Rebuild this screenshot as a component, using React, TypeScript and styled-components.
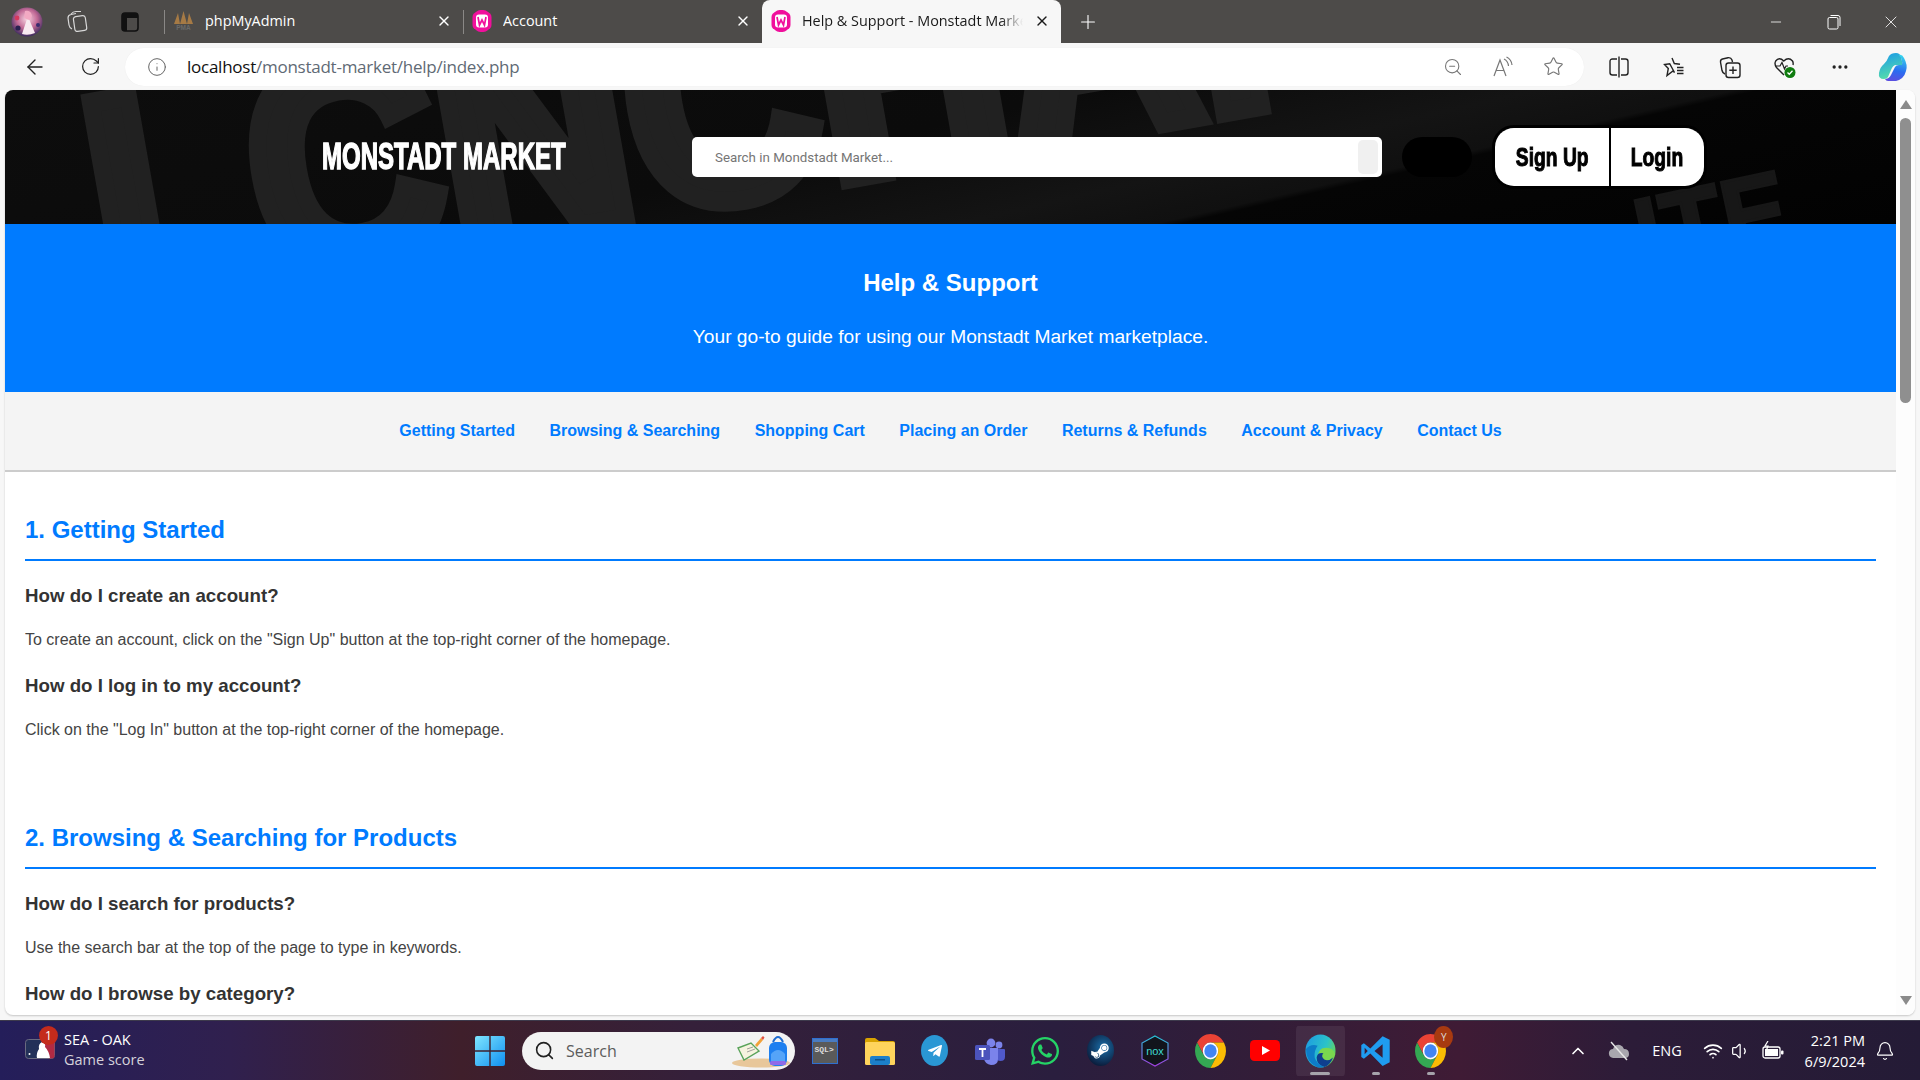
import React from 'react';
import styled, { createGlobalStyle } from 'styled-components';
import {
  ArrowLeft, RotateCw, Info, ZoomOut, Star, X, Plus, Minus, Search, ChevronUp, Bell, Wifi, Volume1, Ellipsis,
} from 'lucide-react';
import { FaWhatsapp, FaTelegramPlane, FaSteamSymbol } from 'react-icons/fa';

const GlobalStyle = createGlobalStyle`
  html, body { margin: 0; padding: 0; overflow: hidden; }
  body { width: 1920px; height: 1080px; background: #f7f7f7; font-family: "Liberation Sans", Arial, sans-serif; }
  * { box-sizing: border-box; }
`;

const Screen = styled.div`
  width: 1920px;
  height: 1080px;
  display: flex;
  flex-direction: column;
  background: #f7f7f7;
`;

/* browser chrome */
const TabStrip = styled.div`
  height: 43px;
  background: #4d4b49;
  display: flex;
  align-items: stretch;
  font-family: "Open Sans", "Noto Sans", sans-serif;
`;

const StripIcon = styled.div<{ $w: number }>`
  width: ${(p) => p.$w}px;
  display: flex;
  align-items: center;
  justify-content: center;
  flex-shrink: 0;
`;

const Tab = styled.div<{ $active?: boolean; $w: number }>`
  position: relative;
  width: ${(p) => p.$w}px;
  display: flex;
  align-items: center;
  gap: 11px;
  padding: 0 11px 2px 9px;
  font-size: 14.4px;
  flex-shrink: 0;
  color: ${(p) => (p.$active ? '#1a1a1a' : '#fff')};
  background: ${(p) => (p.$active ? '#f7f7f7' : 'transparent')};
  border-radius: ${(p) => (p.$active ? '8px 8px 0 0' : '0')};
  ${(p) =>
    p.$active
      ? ''
      : `&::before {
          content: '';
          position: absolute;
          left: 0;
          top: 10px;
          bottom: 9px;
          width: 1px;
          background: #8a8886;
        }`}
`;

const TabTitle = styled.span<{ $fade?: boolean }>`
  flex: 1;
  white-space: nowrap;
  overflow: hidden;
  ${(p) => (p.$fade ? 'mask-image: linear-gradient(90deg, #000 90%, transparent 100%);' : '')}
`;

const WindowControls = styled.div`
  margin-left: auto;
  display: flex;
  align-items: center;
  color: #fff;
`;

const WindowButton = styled.div`
  width: 57.5px;
  display: flex;
  justify-content: center;
`;

const Toolbar = styled.div`
  height: 47px;
  display: flex;
  align-items: center;
  background: #f7f7f7;
  font-family: "Open Sans", "Noto Sans", sans-serif;
`;

const NavButton = styled.div<{ $w: number }>`
  width: ${(p) => p.$w}px;
  display: flex;
  justify-content: center;
  align-items: center;
  color: #222;
  flex-shrink: 0;
`;

const AddressBar = styled.div`
  width: 1459px;
  height: 38px;
  background: #fff;
  border-radius: 19px;
  display: flex;
  align-items: center;
  padding: 0 6px 0 22px;
  box-shadow: 0 0 1px rgba(0, 0, 0, 0.08);
`;

const Url = styled.div`
  margin-left: 20px;
  font-size: 17px;
  letter-spacing: -0.25px;
  color: #5f6a75;
  flex: 1;
  span { color: #111; }
`;

const AddressIcon = styled.div`
  width: 50px;
  display: flex;
  justify-content: center;
  color: #777;
`;

/* page viewport */
const Viewport = styled.div`
  margin: 0 5px;
  height: 925px;
  display: flex;
  background: #fff;
  border-radius: 8px;
  overflow: hidden;
  box-shadow: 0 1px 2px rgba(0, 0, 0, 0.2);
`;

const PageArea = styled.div`
  flex: 1;
  min-width: 0;
  overflow: hidden;
`;

const Scrollbar = styled.div`
  width: 19px;
  flex-shrink: 0;
  background: #fdfdfd;
  display: flex;
  flex-direction: column;
  align-items: center;
  padding-top: 10px;
`;

const Arrow = styled.div<{ $down?: boolean }>`
  width: 0;
  height: 0;
  border-left: 6px solid transparent;
  border-right: 6px solid transparent;
  ${(p) => (p.$down ? 'border-top: 9px solid #8b8b8b;' : 'border-bottom: 9px solid #8b8b8b;')}
`;

const Thumb = styled.div`
  width: 11px;
  height: 285px;
  margin-top: 9px;
  background: #8f8f8f;
  border-radius: 6px;
`;

const ScrollSpacer = styled.div`
  flex: 1;
`;

const ArrowDown = styled(Arrow)`
  margin-bottom: 10px;
`;

/* site header */
const SiteHeader = styled.header`
  position: relative;
  height: 134px;
  overflow: hidden;
  background: linear-gradient(167deg, #0d0d0d 0%, #0b0b0b 44%, #141414 62%, #101010 70%, #050505 71%, #020202 100%);
  display: flex;
  align-items: center;
`;

const BackdropText = styled.div`
  position: absolute;
  left: 60px;
  top: -31px;
  font-size: 300px;
  line-height: 1;
  font-weight: 700;
  color: #212121;
  -webkit-text-stroke: 20px #212121;
  white-space: nowrap;
  transform-origin: left top;
  transform: rotate(-10deg) scaleX(0.88);
  user-select: none;
`;

const BackdropTextLow = styled(BackdropText)`
  left: 1620px;
  top: 95px;
  font-size: 110px;
  color: #171717;
  -webkit-text-stroke: 3px #171717;
  transform: rotate(-12deg) scaleX(0.9);
`;

const HeaderRow = styled.div`
  position: relative;
  width: 100%;
  display: flex;
  align-items: center;
  padding-left: 317px;
`;

const LogoBox = styled.div`
  width: 370px;
  height: 40px;
  display: flex;
  align-items: center;
  flex-shrink: 0;
`;

const LogoText = styled.span`
  font-family: "Liberation Sans Narrow", "Liberation Sans", sans-serif;
  font-size: 36px;
  font-weight: 700;
  color: #fff;
  white-space: nowrap;
  -webkit-text-stroke: 1.4px #fff;
  transform-origin: left center;
  transform: scaleX(0.667);
`;

const SearchForm = styled.div`
  width: 690px;
  height: 40px;
  background: #fff;
  border-radius: 5px;
  display: flex;
  align-items: center;
  padding: 3px 4px 3px 23px;
  flex-shrink: 0;
`;

const Placeholder = styled.div`
  flex: 1;
  font-family: Roboto, "Liberation Sans", sans-serif;
  font-size: 13.33px;
  color: #757575;
`;

const SearchButton = styled.div`
  width: 20px;
  height: 34px;
  background: #f0f0f0;
  border-radius: 5px;
`;

const BlackPill = styled.div`
  width: 70px;
  height: 40px;
  margin-left: 20px;
  background: #000;
  border-radius: 20px;
  flex-shrink: 0;
`;

const AuthGroup = styled.div`
  display: flex;
  margin-left: 20px;
  height: 64px;
  background: #000;
  border: 3px solid #000;
  border-radius: 22px;
  overflow: hidden;
  gap: 2px;
`;

const AuthButton = styled.div<{ $w: number }>`
  width: ${(p) => p.$w}px;
  background: #fff;
  display: flex;
  align-items: center;
  justify-content: center;
`;

const AuthLabel = styled.span`
  font-family: "Liberation Sans Narrow", "Liberation Sans", sans-serif;
  font-size: 25px;
  font-weight: 700;
  color: #000;
  -webkit-text-stroke: 1px #000;
  transform: scaleX(0.77);
  white-space: nowrap;
`;

/* help page */
const Hero = styled.section`
  height: 168px;
  background: #007bff;
  color: #fff;
  text-align: center;
  padding-top: 45px;
`;

const HeroTitle = styled.h1`
  margin: 0;
  font-size: 24px;
  line-height: 28px;
  font-weight: 700;
`;

const HeroText = styled.p`
  margin: 28px 0 0;
  font-size: 19.2px;
  line-height: 23px;
`;

const SectionNav = styled.nav`
  height: 80px;
  background: #f4f4f4;
  border-bottom: 2px solid #ccc;
  display: flex;
  justify-content: center;
  align-items: center;
  gap: 34.5px;
  padding-bottom: 1px;
`;

const SectionLink = styled.a`
  color: #007bff;
  font-weight: 700;
  font-size: 16px;
  text-decoration: none;
`;

const Content = styled.main`
  padding: 44px 20px 0;
`;

const Section = styled.section`
  margin-bottom: 84.5px;
`;

const SectionTitle = styled.h2`
  margin: 0 0 24px;
  padding-bottom: 15px;
  font-size: 24px;
  line-height: 28px;
  color: #007bff;
  border-bottom: 2px solid #007bff;
`;

const Question = styled.h3`
  margin: 0 0 24px;
  font-size: 18.72px;
  line-height: 22px;
  color: #333;
`;

const Answer = styled.p`
  margin: 0 0 26px;
  font-size: 16px;
  line-height: 18px;
  color: #444;
`;

/* taskbar */
const Taskbar = styled.footer`
  margin-top: 5px;
  height: 60px;
  display: flex;
  align-items: center;
  color: #fff;
  font-family: "Open Sans", "Noto Sans", sans-serif;
  background: linear-gradient(90deg, #241e5a 0%, #30204e 12%, #3f1f2b 24%, #35203a 36%, #2a1e3e 55%, #331d38 66%, #3f1b35 76%, #2c1c38 85%, #241b36 100%);
  border-top: 1px solid #3d3a4c;
`;

const Widget = styled.div`
  position: relative;
  width: 462px;
  padding: 0 0 2px 64px;
  font-size: 14.5px;
  line-height: 20px;
  flex-shrink: 0;
`;

const WidgetIcon = styled.div`
  position: absolute;
  left: 25px;
  top: 9px;
`;

const WidgetBadge = styled.div`
  position: absolute;
  left: 39px;
  top: -4px;
  width: 19px;
  height: 19px;
  border-radius: 50%;
  background: #c42b1c;
  font-size: 12px;
  line-height: 19px;
  text-align: center;
`;

const WidgetSub = styled.div`
  color: #d5d2da;
`;

const TaskSlot = styled.div<{ $active?: boolean; $mark?: number }>`
  position: relative;
  width: 55.1px;
  height: 50px;
  padding: 0 3px;
  display: flex;
  align-items: center;
  justify-content: center;
  flex-shrink: 0;
  border-radius: 5px;
  background: ${(p) => (p.$active ? 'rgba(255,255,255,0.07)' : 'transparent')};
  background-clip: content-box;
  ${(p) =>
    p.$mark
      ? `&::after {
          content: '';
          position: absolute;
          bottom: 1px;
          left: 50%;
          width: ${p.$mark}px;
          height: 3px;
          margin-left: -${p.$mark / 2}px;
          border-radius: 2px;
          background: #a6a3ab;
        }`
      : ''}
`;

const TaskSearch = styled.div`
  width: 273px;
  height: 38px;
  margin: 0 2px 0 5px;
  background: #f3f3f3;
  border-radius: 19px;
  display: flex;
  align-items: center;
  padding-left: 12px;
  gap: 11px;
  color: #5c5c5c;
  font-size: 16px;
  flex-shrink: 0;
  position: relative;
`;

const SearchArt = styled.div`
  position: absolute;
  right: 4px;
  top: 2px;
`;

const Tray = styled.div`
  margin-left: auto;
  display: flex;
  align-items: center;
  height: 100%;
  padding-right: 15px;
`;

const TrayItem = styled.div<{ $w: number }>`
  width: ${(p) => p.$w}px;
  display: flex;
  justify-content: center;
  align-items: center;
  font-size: 14.5px;
  flex-shrink: 0;
`;

const Clock = styled.div`
  width: 70px;
  text-align: right;
  font-size: 14.5px;
  line-height: 21px;
  flex-shrink: 0;
`;

/* drawn icons */
const Avatar = () => (
  <svg width="32" height="30" viewBox="0 0 32 30">
    <defs>
      <radialGradient id="av" cx="50%" cy="40%" r="60%">
        <stop offset="0" stopColor="#f7d5e2" />
        <stop offset="0.55" stopColor="#c26a96" />
        <stop offset="1" stopColor="#3b2a5e" />
      </radialGradient>
    </defs>
    <ellipse cx="16" cy="15" rx="15.5" ry="14.5" fill="url(#av)" />
    <path d="M11 27 L16 12 L18 12 L24 26 Q17 29 11 27z" fill="#f8eaf0" />
    <path d="M14 4 Q20 3 21 9 L19 13 Q15 13 13 10z" fill="#f2a9c3" />
    <circle cx="6" cy="11" r="2.4" fill="#d6395f" />
    <circle cx="7" cy="21" r="2.6" fill="#2a2050" />
    <circle cx="27" cy="18" r="2" fill="#3a2b6e" />
  </svg>
);

const WorkspacesIcon = () => (
  <svg width="22" height="24" viewBox="0 0 22 24" fill="none" stroke="#d8d8d8" strokeWidth="1.2">
    <rect x="8" y="6" width="12" height="15" rx="2.5" transform="rotate(-8 14 13)" />
    <path d="M6 19 Q3.5 18 3 15 L2 8 Q2 5 5 4.5 L10 3.5" />
    <path d="M5 4 Q7 1.5 10 1.5 L15 1.5" />
  </svg>
);

const VerticalTabsIcon = () => (
  <svg width="18" height="20" viewBox="0 0 18 20">
    <rect x="1" y="1" width="16" height="18" rx="3" fill="none" stroke="#111" strokeWidth="1.6" />
    <path d="M1 4 Q1 1 4 1 H14 Q17 1 17 4 V6 H6 V19 H4 Q1 19 1 16z" fill="#111" />
  </svg>
);

const PmaIcon = () => (
  <svg width="21" height="21" viewBox="0 0 21 21">
    <path d="M1 14 L5 3 L7 14z M7 14 L10.5 1 L14 14z M14 14 L16 3 L20 14z" fill="#a67a45" />
    <text x="10.5" y="20" textAnchor="middle" fontSize="6.5" fontWeight="700" fill="#6a6a6a" fontFamily="Liberation Sans">PMA</text>
  </svg>
);

const WampIcon = () => (
  <svg width="20" height="22" viewBox="0 0 20 22">
    <rect x="0.5" y="2" width="19" height="18" rx="5" fill="#f0109c" />
    <rect x="3.5" y="1" width="13" height="20" rx="5" fill="none" stroke="#f0109c" strokeWidth="2" />
    <rect x="4" y="4.5" width="12" height="13" rx="3" fill="#fff" />
    <path d="M6 7 L7.5 15 L10 10 L12.5 15 L14 7" fill="none" stroke="#f0109c" strokeWidth="1.7" />
  </svg>
);

const ReadAloudIcon = () => (
  <svg width="22" height="22" viewBox="0 0 22 22" fill="none" stroke="#777" strokeWidth="1.2">
    <path d="M2 20 L8 4 L14 20 M4.5 14.5 H11.5" />
    <path d="M12 3 Q16 5 16.5 10 M14.5 1 Q19.5 3.5 20 9" />
  </svg>
);

const SplitIcon = () => (
  <svg width="20" height="22" viewBox="0 0 20 22" fill="none" stroke="#222" strokeWidth="1.4">
    <path d="M8 3 H3.5 Q1 3 1 5.5 V16.5 Q1 19 3.5 19 H8 M12 3 H16.5 Q19 3 19 5.5 V16.5 Q19 19 16.5 19 H12" />
    <path d="M10 0.5 V21.5" />
  </svg>
);

const FavoritesIcon = () => (
  <svg width="22" height="22" viewBox="0 0 22 22" fill="none" stroke="#222" strokeWidth="1.4">
    <path d="M9 2 L11.3 7.5 L17 8.2 M11.5 16.5 L10 15 L4 19.5 L5.3 12.5 L1.5 8.5 L6.7 7.7z" />
    <path d="M14 11.5 H20.5 M14 14.5 H20.5 M14 17.5 H20.5" />
  </svg>
);

const CollectionsIcon = () => (
  <svg width="22" height="24" viewBox="0 0 22 24" fill="none" stroke="#222" strokeWidth="1.4">
    <rect x="7" y="8" width="14" height="14.5" rx="2.5" />
    <path d="M14 11.5 V19 M10.3 15.2 H17.7" />
    <path d="M6 19 Q3.5 18 3 15.5 L1.5 7 Q1.3 4.5 3.5 4 L9 2.7 Q12 2.3 13 5 L13.5 7" />
  </svg>
);

const HealthIcon = () => (
  <svg width="24" height="24" viewBox="0 0 24 24" fill="none">
    <path d="M11 20 L3.5 12.5 Q1 9 2.7 6 Q6 1.5 10.8 6 Q15.5 1.5 19.5 6 Q20.5 7.5 20 10" stroke="#222" strokeWidth="1.4" />
    <path d="M2.5 11 H7 L9 7.5 L11.5 14 L13 11 H15" stroke="#222" strokeWidth="1.2" />
    <circle cx="17" cy="17.5" r="5.5" fill="#107c10" />
    <path d="M14.5 17.5 L16.3 19.3 L19.5 15.8" stroke="#fff" strokeWidth="1.3" />
  </svg>
);

const CopilotIcon = () => (
  <svg width="30" height="30" viewBox="0 0 30 30">
    <defs>
      <linearGradient id="cpa" x1="0.2" y1="0" x2="0.5" y2="1">
        <stop offset="0" stopColor="#1a9be8" />
        <stop offset="1" stopColor="#58e0a8" />
      </linearGradient>
      <linearGradient id="cpb" x1="0.6" y1="0" x2="0.4" y2="1">
        <stop offset="0" stopColor="#35d3ee" />
        <stop offset="0.6" stopColor="#2a6cf0" />
        <stop offset="1" stopColor="#5a4fe0" />
      </linearGradient>
    </defs>
    <path d="M11 4 Q13 1 18 1 Q22 1 23 5 L25 13 H18 Q15 13 13 18 L10 25 Q9 27 6 27 Q0 27 1 21 Q2 15 6 12 Q9 9 11 4z" fill="url(#cpa)" />
    <path d="M21 3 Q24 2 26 6 Q30 13 28 19 Q26 27 18 29 H10 Q8 29 7 27 Q11 27 13 23 L17 15 Q18 13 21 13 H24 Q25 8 21 3z" fill="url(#cpb)" />
  </svg>
);

const MlbIcon = () => (
  <svg width="30" height="20" viewBox="0 0 30 20">
    <rect x="0.5" y="0.5" width="29" height="19" rx="3" fill="#233159" stroke="#6a6a80" />
    <path d="M20 0.5 H27 Q29.5 0.5 29.5 3 V17 Q29.5 19.5 27 19.5 H24 Q24 15 20 12z" fill="#b22a43" />
    <path d="M12 19 Q11 14 14 10 Q13 5 17 3 Q21 4 20 8 Q24 12 25 19z" fill="#fff" />
    <circle cx="4.5" cy="15" r="1" fill="#fff" />
  </svg>
);

const WindowsLogo = () => (
  <svg width="30" height="30" viewBox="0 0 30 30">
    <defs>
      <linearGradient id="win" x1="0" y1="0" x2="1" y2="1">
        <stop offset="0" stopColor="#7fe6ff" />
        <stop offset="1" stopColor="#0f8ff0" />
      </linearGradient>
    </defs>
    <path d="M0 2 Q0 0 2 0 H14.3 V14.3 H0z M15.7 0 H28 Q30 0 30 2 V14.3 H15.7z M0 15.7 H14.3 V30 H2 Q0 30 0 28z M15.7 15.7 H30 V28 Q30 30 28 30 H15.7z" fill="url(#win)" />
  </svg>
);

const BookBag = () => (
  <svg width="60" height="34" viewBox="0 0 60 34">
    <ellipse cx="30" cy="29" rx="29" ry="4.5" fill="#e8c79a" />
    <path d="M7 14 L20 9 L28 17 L13 26z" fill="#f6f3df" stroke="#5aa35a" strokeWidth="1.4" />
    <path d="M16 15 L22 13 M16 18 L24 15" stroke="#8a8a8a" strokeWidth="0.8" />
    <path d="M24 11 L30 4 L32 6 L26 13z" fill="#f2a23a" />
    <path d="M30 4 L32 2 L33.5 3.5 L32 6z" fill="#e0503f" />
    <rect x="38" y="8" width="18" height="24" rx="6" fill="#1d7ff0" />
    <path d="M42 8 Q47 -2 52 8" fill="none" stroke="#1d6bd0" strokeWidth="2" />
    <path d="M40 20 Q47 12 54 20 V28 H40z" fill="#55a4f8" />
    <rect x="39" y="27" width="16" height="4" rx="1.5" fill="#8f6be8" />
  </svg>
);

const SqlIcon = () => (
  <svg width="26" height="26" viewBox="0 0 26 26">
    <rect x="0.5" y="0.5" width="25" height="25" fill="#5a5a5a" stroke="#2f6fd0" />
    <rect x="1" y="1" width="24" height="3" fill="#4a7bc0" />
    <text x="2.5" y="14" fontSize="8" fontFamily="Liberation Mono" fill="#ddd" fontWeight="700">SQL&gt;</text>
  </svg>
);

const FolderIcon = () => (
  <svg width="30" height="28" viewBox="0 0 30 28">
    <path d="M0 3 Q0 1 2 1 H10 L14 4 H28 Q30 4 30 6 V10 H0z" fill="#d9a300" />
    <rect x="0" y="5" width="30" height="23" rx="1.5" fill="#ffd45c" />
    <rect x="5" y="19" width="20" height="9" rx="2" fill="#1c7fc9" />
    <rect x="10" y="22" width="10" height="1.5" fill="#0c4f86" />
  </svg>
);

const Disc = styled.div<{ $bg: string; $size: number }>`
  width: ${(p) => p.$size}px;
  height: ${(p) => p.$size + 4}px;
  border-radius: 50%;
  background: ${(p) => p.$bg};
  display: flex;
  align-items: center;
  justify-content: center;
`;

const TelegramIcon = () => (
  <Disc $bg="#2a97d4" $size={27}>
    <FaTelegramPlane size={16} color="#fff" />
  </Disc>
);

const TeamsIcon = () => (
  <svg width="30" height="28" viewBox="0 0 30 28">
    <circle cx="24" cy="8" r="3.4" fill="#7b83eb" />
    <circle cx="16" cy="6" r="4.4" fill="#7b83eb" />
    <path d="M20 12 H29 Q30 12 30 13 V20 Q30 24 25.5 24 Q22 24 21 22z" fill="#5059c9" />
    <path d="M9 11 H23 V22 Q23 28 16 28 Q10 27 9 22z" fill="#7b83eb" />
    <rect x="0" y="8" width="15" height="15" rx="1.5" fill="#4b53bc" />
    <path d="M4 12 H11 M7.5 12 V20" stroke="#fff" strokeWidth="1.8" />
  </svg>
);

const NoxIcon = () => (
  <svg width="28" height="32" viewBox="0 0 28 32">
    <defs>
      <linearGradient id="nox" x1="0" y1="0" x2="0" y2="1">
        <stop offset="0" stopColor="#25c5d8" />
        <stop offset="1" stopColor="#a23fe0" />
      </linearGradient>
    </defs>
    <path d="M14 1 L27 8 V24 L14 31 L1 24 V8z" fill="#12141c" stroke="url(#nox)" strokeWidth="1.2" />
    <text x="14" y="20" textAnchor="middle" fontSize="11" fill="#3fd8d0" fontFamily="Liberation Sans">nox</text>
  </svg>
);

const ChromeIcon = () => (
  <svg width="31" height="34" viewBox="4 4 40 40" preserveAspectRatio="none">
    <path d="M6.68 14 A20 20 0 0 1 41.32 14 H24 A10 10 0 0 0 15.34 29z" fill="#ea4335" />
    <path d="M6.68 14 A20 20 0 0 0 24 44 L32.66 29 A10 10 0 0 1 15.34 29z" fill="#34a853" />
    <path d="M24 44 A20 20 0 0 0 41.32 14 H24 A10 10 0 0 1 32.66 29z" fill="#fbbc04" />
    <circle cx="24" cy="24" r="10" fill="#fff" />
    <circle cx="24" cy="24" r="8" fill="#4285f4" />
  </svg>
);

const YoutubeIcon = () => (
  <svg width="30" height="21" viewBox="0 0 30 21">
    <rect width="30" height="21" rx="4.5" fill="#f00" />
    <path d="M12 6 L20 10.5 L12 15z" fill="#fff" />
  </svg>
);

const EdgeIcon = () => (
  <svg width="31" height="34" viewBox="0 0 32 32" preserveAspectRatio="none">
    <defs>
      <linearGradient id="edgeA" x1="0" y1="0.3" x2="1" y2="0.7">
        <stop offset="0" stopColor="#1e9fe0" />
        <stop offset="0.6" stopColor="#2bc3c8" />
        <stop offset="1" stopColor="#6ed64a" />
      </linearGradient>
    </defs>
    <circle cx="16" cy="16" r="15.5" fill="url(#edgeA)" />
    <path d="M31 19 Q29 13 22 13 Q13 13 14 21 Q16 27 24 27 Q29 25 31 19z" fill="#7ad84f" />
    <path d="M29 22 Q24 26 20 24 Q16 21 19 18 Q13 17 12 22 Q12 29 20 31 Q26 29 29 22z" fill="#0f3f8e" />
    <path d="M12 31 Q1 26 1 14 Q6 9 13 11 Q9 16 10 22 Q12 28 20 31 Q16 32 12 31z" fill="#0d7cc8" />
  </svg>
);

const VscodeIcon = () => (
  <svg width="31" height="34" viewBox="0 0 24 24" preserveAspectRatio="none">
    <path
      fillRule="evenodd"
      d="M17.5 1.5 L23 4 V20 L17.5 22.5 L8 13.8 L3 17.5 L1 16.2 V7.8 L3 6.5 L8 10.2 Z M17.5 7.2 L11.2 12 L17.5 16.8 Z M3.6 9.7 V14.3 L6 12 Z"
      fill="#1f9cf0"
    />
  </svg>
);

const BadgedChrome = styled.div`
  position: relative;
  display: flex;
`;

const ChromeBadge = styled.div`
  position: absolute;
  right: -7px;
  top: -8px;
  width: 19px;
  height: 22px;
  border-radius: 50%;
  background: #a73a10;
  color: #ddd;
  font-size: 10px;
  line-height: 22px;
  text-align: center;
`;

const CloudOffIcon = () => (
  <svg width="22" height="20" viewBox="0 0 22 20">
    <path d="M5 17 Q0 16 1 11 Q2 8 5 8 Q7 3 12 4 Q15 5 16 8 Q21 8 21 13 Q21 17 17 17z" fill="#a9a7ae" />
    <path d="M3 1 L19 19" stroke="#e8e8e8" strokeWidth="1.4" />
  </svg>
);

const BatteryIcon = () => (
  <svg width="22" height="20" viewBox="0 0 22 20" fill="none">
    <rect x="1" y="6" width="17" height="11" rx="2" stroke="#fff" strokeWidth="1.3" />
    <rect x="3" y="8" width="13" height="7" fill="#fff" />
    <rect x="19" y="9.5" width="2.5" height="4" rx="1" fill="#fff" />
    <path d="M6 0 L3 5 H6 L4.5 9" stroke="#fff" strokeWidth="1.2" />
  </svg>
);

const links = ['Getting Started', 'Browsing & Searching', 'Shopping Cart', 'Placing an Order', 'Returns & Refunds', 'Account & Privacy', 'Contact Us'];

const sections = [
  {
    title: '1. Getting Started',
    items: [
      ['How do I create an account?', 'To create an account, click on the "Sign Up" button at the top-right corner of the homepage.'],
      ['How do I log in to my account?', 'Click on the "Log In" button at the top-right corner of the homepage.'],
    ],
  },
  {
    title: '2. Browsing & Searching for Products',
    items: [
      ['How do I search for products?', 'Use the search bar at the top of the page to type in keywords.'],
      ['How do I browse by category?', 'Open the category menu and pick a category.'],
    ],
  },
];

const App: React.FC = () => {
  return (
    <Screen>
      <GlobalStyle />
      <TabStrip>
        <StripIcon $w={54}><Avatar /></StripIcon>
        <StripIcon $w={46}><WorkspacesIcon /></StripIcon>
        <StripIcon $w={60}><VerticalTabsIcon /></StripIcon>
        <StripIcon $w={4} />
        <Tab $w={299}>
          <PmaIcon />
          <TabTitle>phpMyAdmin</TabTitle>
          <X size={16} />
        </Tab>
        <Tab $w={299}>
          <WampIcon />
          <TabTitle>Account</TabTitle>
          <X size={16} />
        </Tab>
        <Tab $active $w={299}>
          <WampIcon />
          <TabTitle $fade>Help &amp; Support - Monstadt Market</TabTitle>
          <X size={16} />
        </Tab>
        <StripIcon $w={54}><Plus size={22} color="#fff" strokeWidth={1.2} /></StripIcon>
        <WindowControls>
          <WindowButton><Minus size={16} strokeWidth={1.2} /></WindowButton>
          <WindowButton>
            <svg width="14" height="16" viewBox="0 0 14 16" fill="none" stroke="#fff" strokeWidth="1">
              <rect x="1" y="3.5" width="10" height="11.5" rx="1.5" />
              <path d="M3.5 1.5 H11 Q13 1.5 13 3.5 V12" />
            </svg>
          </WindowButton>
          <WindowButton><X size={20} strokeWidth={1} /></WindowButton>
        </WindowControls>
      </TabStrip>

      <Toolbar>
        <NavButton $w={70}><ArrowLeft size={24} strokeWidth={1.4} /></NavButton>
        <NavButton $w={40}><RotateCw size={21} strokeWidth={1.4} /></NavButton>
        <NavButton $w={15} />
        <AddressBar>
          <Info size={20} strokeWidth={1.2} color="#666" />
          <Url><span>localhost</span>/monstadt-market/help/index.php</Url>
          <AddressIcon><ZoomOut size={20} strokeWidth={1.3} /></AddressIcon>
          <AddressIcon><ReadAloudIcon /></AddressIcon>
          <AddressIcon><Star size={21} strokeWidth={1.3} /></AddressIcon>
        </AddressBar>
        <NavButton $w={8} />
        <NavButton $w={54}><SplitIcon /></NavButton>
        <NavButton $w={56}><FavoritesIcon /></NavButton>
        <NavButton $w={56}><CollectionsIcon /></NavButton>
        <NavButton $w={54}><HealthIcon /></NavButton>
        <NavButton $w={55}><Ellipsis size={20} /></NavButton>
        <NavButton $w={52}><CopilotIcon /></NavButton>
      </Toolbar>

      <Viewport>
        <PageArea>
          <SiteHeader>
            <BackdropText aria-hidden="true">LCNCHAPT</BackdropText>
            <BackdropTextLow aria-hidden="true">ITE</BackdropTextLow>
            <HeaderRow>
              <LogoBox><LogoText>MONSTADT MARKET</LogoText></LogoBox>
              <SearchForm>
                <Placeholder>Search in Mondstadt Market...</Placeholder>
                <SearchButton />
              </SearchForm>
              <BlackPill />
              <AuthGroup>
                <AuthButton $w={114}><AuthLabel>Sign Up</AuthLabel></AuthButton>
                <AuthButton $w={93}><AuthLabel>Login</AuthLabel></AuthButton>
              </AuthGroup>
            </HeaderRow>
          </SiteHeader>

          <Hero>
            <HeroTitle>Help &amp; Support</HeroTitle>
            <HeroText>Your go-to guide for using our Monstadt Market marketplace.</HeroText>
          </Hero>

          <SectionNav>
            {links.map((l) => (
              <SectionLink key={l} href="#">{l}</SectionLink>
            ))}
          </SectionNav>

          <Content>
            {sections.map((s) => (
              <Section key={s.title}>
                <SectionTitle>{s.title}</SectionTitle>
                {s.items.map(([q, a]) => (
                  <React.Fragment key={q}>
                    <Question>{q}</Question>
                    <Answer>{a}</Answer>
                  </React.Fragment>
                ))}
              </Section>
            ))}
          </Content>
        </PageArea>
        <Scrollbar>
          <Arrow />
          <Thumb />
          <ScrollSpacer />
          <ArrowDown $down />
        </Scrollbar>
      </Viewport>

      <Taskbar>
        <Widget>
          <WidgetIcon><MlbIcon /></WidgetIcon>
          <WidgetBadge>1</WidgetBadge>
          <div>SEA - OAK</div>
          <WidgetSub>Game score</WidgetSub>
        </Widget>
        <TaskSlot><WindowsLogo /></TaskSlot>
        <TaskSearch>
          <Search size={21} color="#222" strokeWidth={1.8} />
          Search
          <SearchArt><BookBag /></SearchArt>
        </TaskSearch>
        <TaskSlot><SqlIcon /></TaskSlot>
        <TaskSlot><FolderIcon /></TaskSlot>
        <TaskSlot><TelegramIcon /></TaskSlot>
        <TaskSlot><TeamsIcon /></TaskSlot>
        <TaskSlot><FaWhatsapp size={32} color="#25d366" /></TaskSlot>
        <TaskSlot>
          <Disc $bg="radial-gradient(circle at 60% 40%, #1a6ea8, #0b1e3e 75%)" $size={27}>
            <FaSteamSymbol size={20} color="#fff" />
          </Disc>
        </TaskSlot>
        <TaskSlot><NoxIcon /></TaskSlot>
        <TaskSlot><ChromeIcon /></TaskSlot>
        <TaskSlot><YoutubeIcon /></TaskSlot>
        <TaskSlot $active $mark={20}><EdgeIcon /></TaskSlot>
        <TaskSlot $mark={8}><VscodeIcon /></TaskSlot>
        <TaskSlot $mark={8}>
          <BadgedChrome>
            <ChromeIcon />
            <ChromeBadge>Y</ChromeBadge>
          </BadgedChrome>
        </TaskSlot>
        <Tray>
          <TrayItem $w={42}><ChevronUp size={20} strokeWidth={2} /></TrayItem>
          <TrayItem $w={40}><CloudOffIcon /></TrayItem>
          <TrayItem $w={56}>ENG</TrayItem>
          <TrayItem $w={36}><Wifi size={20} strokeWidth={2} /></TrayItem>
          <TrayItem $w={20}><Volume1 size={20} strokeWidth={1.5} /></TrayItem>
          <TrayItem $w={44}><BatteryIcon /></TrayItem>
          <Clock>2:21 PM<br />6/9/2024</Clock>
          <TrayItem $w={40}><Bell size={20} strokeWidth={1.4} /></TrayItem>
        </Tray>
      </Taskbar>
    </Screen>
  );
};

export default App;
